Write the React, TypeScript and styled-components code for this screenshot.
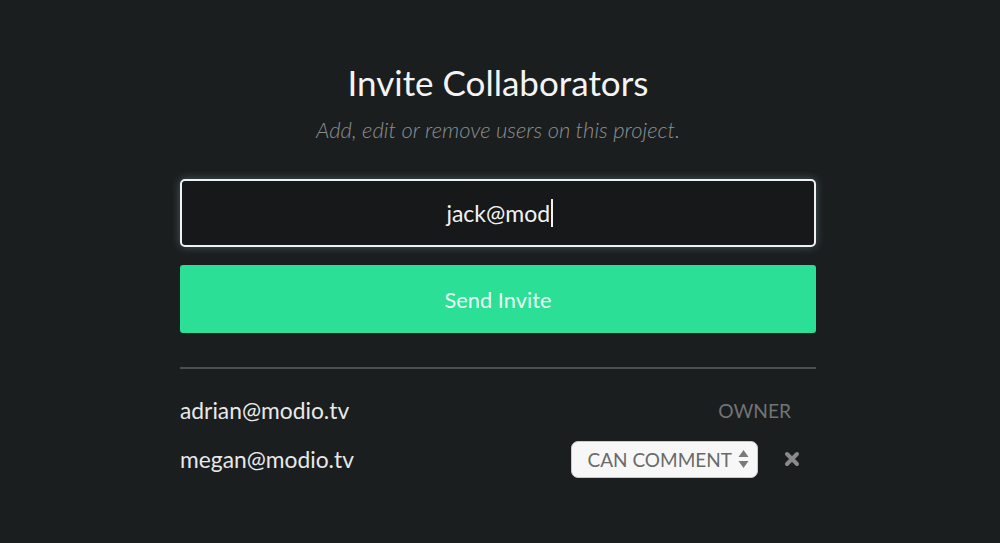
import React from "react";
import styled, { createGlobalStyle } from "styled-components";

const GlobalStyle = createGlobalStyle`
  html, body {
    margin: 0;
    padding: 0;
    background: #1b1e1f;
    font-family: "Lato", "Open Sans", sans-serif;
  }
`;

const collaborators = [
  { email: "adrian@modio.tv", role: "OWNER", owner: true },
  { email: "megan@modio.tv", role: "CAN COMMENT", owner: false },
];

const App = () => {
  return (
    <>
      <GlobalStyle />
      <Page>
        <Panel>
          <Title>Invite Collaborators</Title>
          <Subtitle>Add, edit or remove users on this project.</Subtitle>
          <EmailField>
            <span>jack@mod</span>
            <Caret />
          </EmailField>
          <SendButton>Send Invite</SendButton>
          <Divider />
          <List>
            {collaborators.map((c) => (
              <Row key={c.email}>
                <Email>{c.email}</Email>
                {c.owner ? (
                  <OwnerLabel>{c.role}</OwnerLabel>
                ) : (
                  <Actions>
                    <RoleSelect>
                      {c.role}
                      <svg width="11" height="20" viewBox="0 0 11 20">
                        <path d="M5.5 1 L10.5 8 H0.5 Z" fill="#7a7a7a" />
                        <path d="M5.5 19 L10.5 12 H0.5 Z" fill="#7a7a7a" />
                      </svg>
                    </RoleSelect>
                    <Remove>
                      <svg width="16" height="16" viewBox="0 0 16 16">
                        <path
                          d="M3 3 L13 13 M13 3 L3 13"
                          stroke="#8a8a8a"
                          strokeWidth="4"
                          strokeLinecap="round"
                        />
                      </svg>
                    </Remove>
                  </Actions>
                )}
              </Row>
            ))}
          </List>
        </Panel>
      </Page>
    </>
  );
};

export default App;

const Page = styled.div`
  width: 1000px;
  height: 543px;
  box-sizing: border-box;
  padding-right: 4px;
  display: flex;
  justify-content: center;
  background: #1b1e1f;
`;

const Panel = styled.div`
  width: 636px;
  padding-top: 62px;
  display: flex;
  flex-direction: column;
  align-items: stretch;
`;

const Title = styled.h1`
  margin: 0;
  text-align: center;
  color: #f4f4f4;
  font-weight: 400;
  font-size: 35px;
  line-height: 40px;
`;

const Subtitle = styled.p`
  margin: 15px 0 0;
  text-align: center;
  color: #8c8f90;
  font-style: italic;
  font-weight: 300;
  font-size: 22px;
  line-height: 26px;
`;

const EmailField = styled.div`
  margin-top: 36px;
  height: 68px;
  box-sizing: border-box;
  border: 2px solid #eef2f2;
  border-radius: 5px;
  background: #161819;
  box-shadow: 0 0 8px rgba(160, 200, 210, 0.35);
  display: flex;
  align-items: center;
  justify-content: center;
  color: #f2f2f2;
  font-size: 23px;
  span {
    margin-left: 3px;
  }
`;

const Caret = styled.i`
  display: inline-block;
  width: 1.5px;
  height: 28px;
  background: #f2f2f2;
  margin-left: 1px;
`;

const SendButton = styled.button`
  margin-top: 18px;
  height: 68px;
  border: none;
  border-radius: 3px;
  background: #2bdf96;
  color: #e8fbf2;
  font-family: inherit;
  font-size: 21.8px;
`;

const Divider = styled.hr`
  margin: 34px 0 0;
  border: none;
  height: 2px;
  background: #4c4f50;
`;

const List = styled.div`
  padding-top: 21px;
  display: flex;
  flex-direction: column;
  gap: 9px;
`;

const Row = styled.div`
  height: 40px;
  display: flex;
  align-items: center;
  justify-content: space-between;
`;

const Email = styled.span`
  color: #e8e8e8;
  font-size: 22.8px;
`;

const OwnerLabel = styled.span`
  margin-right: 25px;
  color: #717475;
  font-size: 19.2px;
`;

const Actions = styled.div`
  display: flex;
  align-items: center;
  gap: 26px;
  margin-right: 16px;
`;

const RoleSelect = styled.div`
  height: 37px;
  box-sizing: border-box;
  padding: 0 8px 0 15px;
  display: flex;
  align-items: center;
  gap: 6px;
  background: #f7f7f7;
  border: 1px solid #c9c9c9;
  border-radius: 7px;
  color: #6a6a6a;
  font-size: 19px;
`;

const Remove = styled.button`
  padding: 0;
  border: none;
  background: transparent;
  display: flex;
`;
